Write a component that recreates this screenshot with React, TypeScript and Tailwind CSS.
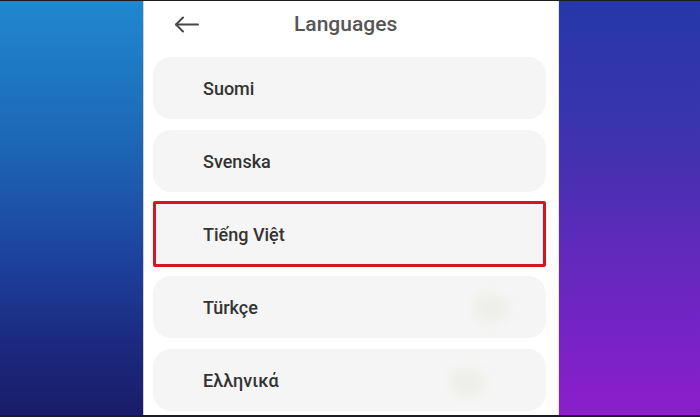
const languages = [
  { name: "Suomi", mt: "mt-[9px]" },
  { name: "Svenska", mt: "mt-[11px]" },
];

function BackArrow() {
  return (
    <svg width="25" height="17" viewBox="0 0 25 17" fill="none" stroke="#474747" strokeWidth="2" strokeLinecap="round" strokeLinejoin="round">
      <path d="M24 8.5H2" />
      <path d="M9 1.5L2 8.5l7 7" />
    </svg>
  );
}

function Row({ name, className = "", blob }: { name: string; className?: string; blob?: string }) {
  return (
    <div className={`flex h-[62px] items-center justify-between rounded-[18px] bg-[#f5f5f5] pl-[50px] ${className}`}>
      <span className="text-[18px] font-medium text-[#333333]">{name}</span>
      {blob && <span className={`h-[28px] w-[34px] rounded-full bg-[#eeeeea] blur-[4px] ${blob}`} />}
    </div>
  );
}

export default function App() {
  return (
    <div
      className="flex h-[417px] w-[700px] overflow-hidden border-t border-b-2 border-[#1c1c24]"
      style={{ fontFamily: "Roboto, 'Noto Sans', Arial, sans-serif" }}
    >
      <div className="w-[143px] shrink-0 bg-[linear-gradient(180deg,#1f88cf_0%,#1d66b5_35%,#1d45a0_60%,#1b2a80_82%,#1a1d68_100%)]" />

      <div className="flex w-[415px] shrink-0 flex-col border-l border-[#cfcfcf] bg-white pl-[9px] pr-[12px]">
        <div className="flex h-[47px] items-center pl-[21px]">
          <BackArrow />
          <h1 className="ml-[95px] text-[21px] font-medium text-[#555555]">Languages</h1>
        </div>

        {languages.map((l) => (
          <Row key={l.name} name={l.name} className={l.mt} />
        ))}

        <div className="mt-[9px] flex h-[66px] items-center rounded-[2px] border-[3px] border-[#d8141c] bg-[#f5f5f5] pl-[47px]">
          <span className="text-[18px] font-medium text-[#333333]">Tiếng Việt</span>
        </div>

        <Row name="Türkçe" className="mt-[9px]" blob="mr-[38px] mt-[2px]" />
        <Row name="Ελληνικά" className="mt-[11px]" blob="mr-[62px] mt-[4px]" />
      </div>

      <div className="flex-1 border-l border-[#e6e6e6] bg-[linear-gradient(180deg,#2638a8_0%,#3a34ad_30%,#5a2bb8_55%,#7424c4_78%,#8c1dcc_100%)]" />
    </div>
  );
}
